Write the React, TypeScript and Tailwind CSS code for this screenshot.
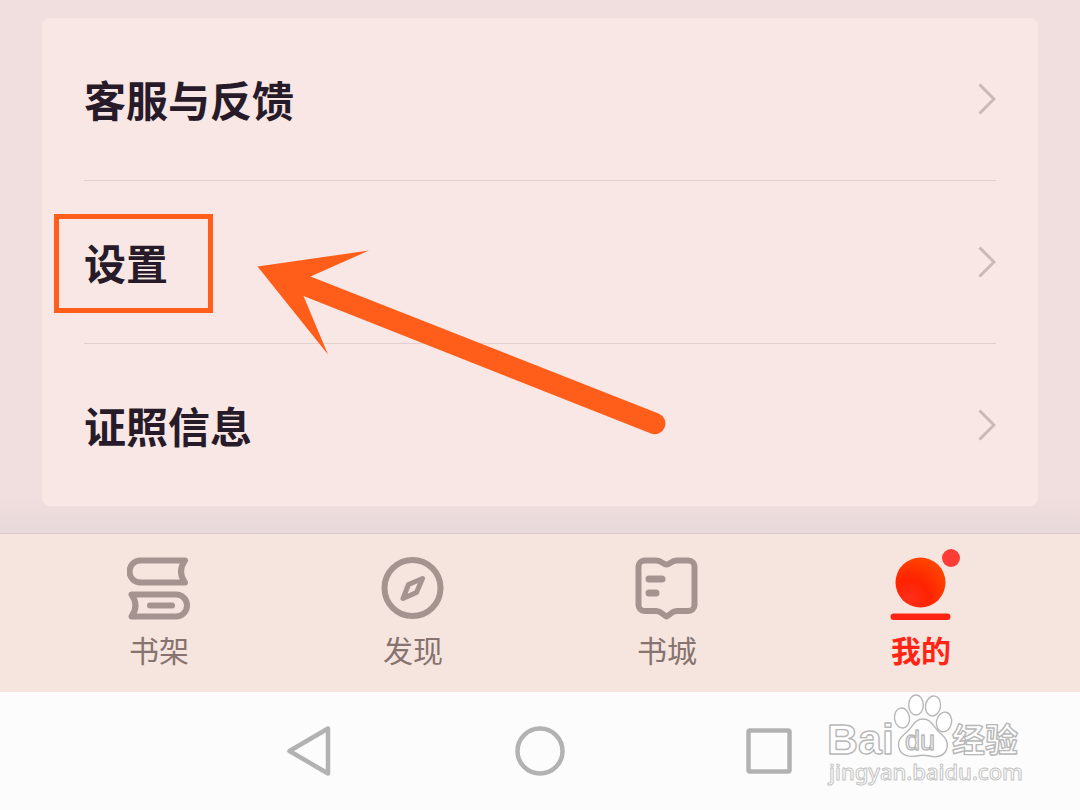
import type { ReactNode } from "react";

const menuItems = [
  { id: "feedback", label: "客服与反馈" },
  { id: "settings", label: "设置", highlighted: true },
  { id: "license", label: "证照信息" },
];

/* Icons */
function ShelfIcon() {
  return (
    <svg className="size-16" viewBox="0 0 64 64" fill="none" stroke="#a59390" strokeWidth="6" strokeLinejoin="round" strokeLinecap="round">
      <path d="M58 4.500H13.500a11 11 0 0 0 0 22H58q-8-11 0-22Z" />
      <path d="M4.500 38.500H49a11 11 0 0 1 0 22H4.500q8-11 0-22Z" />
      <path d="M23 49.500H45" />
    </svg>
  );
}

function CompassIcon() {
  return (
    <svg className="size-16" viewBox="0 0 64 64" fill="none" stroke="#a59390">
      <circle cx="31.500" cy="32" r="28" strokeWidth="6" />
      <path d="M41.500 22.500 27.500 28.500 22 42.500 35.500 36.500Z" strokeWidth="5" strokeLinejoin="round" />
    </svg>
  );
}

function StoreIcon() {
  return (
    <svg className="size-16" viewBox="0 0 64 64" fill="none" stroke="#a59390" strokeWidth="6" strokeLinejoin="round" strokeLinecap="round">
      <path d="M9.500 4.500H21.500c5 0 6 3.500 10 4c4-.5 5-4 10-4H53.500a6 6 0 0 1 6 6V49a6 6 0 0 1-6 6H41.500c-5 0-6 4-10 5.500c-4-1.500-5-5.500-10-5.500H9.500a6 6 0 0 1-6-6V10.500a6 6 0 0 1 6-6Z" />
      <path d="M14 23H27M14 37H21" strokeWidth="7" />
    </svg>
  );
}

function MineIcon() {
  return (
    <svg className="size-16 overflow-visible" viewBox="0 0 64 64">
      <defs>
        <radialGradient id="ball" cx="0.3" cy="0.8" r="0.9">
          <stop offset="0" stopColor="#ff2e1c" />
          <stop offset="0.4" stopColor="#ff2200" />
          <stop offset="1" stopColor="#ff4a00" />
        </radialGradient>
      </defs>
      <circle cx="31.500" cy="26.500" r="25" fill="url(#ball)" />
      <rect x="1.500" y="57.500" width="60" height="6.500" rx="3.250" fill="#ff2413" />
    </svg>
  );
}

function Chevron() {
  return (
    <svg className="h-8 w-[18px] shrink-0" viewBox="0 0 18 32" fill="none" stroke="#cbb9b8" strokeWidth="3">
      <path d="M1.500 1.500 16 16 1.500 30.500" />
    </svg>
  );
}

function Pointer() {
  return (
    <svg className="pointer-events-none absolute left-[172px] top-[68px] z-10 h-[188px] w-[412px]" viewBox="256 249 412 188">
      <path
        d="M257.500 266.500 369 250.500 310.500 276.500 658.500 413.500A10.500 10.500 0 0 1 651 433.500L303.500 296 328 354.500Z"
        fill="#ff5e1a"
      />
    </svg>
  );
}

function Watermark() {
  return (
    <svg
      className="pointer-events-none absolute right-14 top-0 h-24 w-[200px] overflow-visible"
      viewBox="0 0 200 96"
      fill="#fff"
      stroke="#b8b8b8"
      strokeWidth="1.400"
      strokeLinejoin="round"
    >
      <text x="3" y="62" fontSize="43" fontWeight="700" fontFamily="'Liberation Sans', Arial, sans-serif">Bai</text>
      <ellipse cx="78" cy="26" rx="7.500" ry="10" transform="rotate(-8 78 26)" />
      <ellipse cx="92" cy="13" rx="7.300" ry="10" />
      <ellipse cx="109" cy="14" rx="7.500" ry="10" transform="rotate(10 109 14)" />
      <ellipse cx="120" cy="30" rx="7.500" ry="10" transform="rotate(12 120 30)" />
      <path d="M99 27C91 27 89 34 84 39C77 45 73 48 75 56C77 64 86 65 92 64C97 63 101 63 106 64C113 66 121 64 123 56C125 48 119 44 114 39C109 34 107 27 99 27Z" />
      <text x="81" y="58" fontSize="27" fontFamily="'Liberation Sans', Arial, sans-serif">du</text>
      <text x="128" y="60" fontSize="33" fontWeight="700" fontFamily="'Noto Sans CJK SC', sans-serif">经验</text>
      <text x="5" y="88" fontSize="22" fontWeight="500" strokeWidth="1" stroke="#c4c4c4" fontFamily="'Noto Sans', sans-serif">
        jingyan.baidu.com
      </text>
    </svg>
  );
}

/* Bottom tab */
function Tab({ label, icon, active, badge }: { label: string; icon: ReactNode; active?: boolean; badge?: boolean }) {
  return (
    <button type="button" className="flex flex-1 flex-col items-center gap-[9px]">
      <span className="relative">
        {icon}
        {badge && <span className="absolute -right-[7px] -top-[7px] size-[18px] rounded-full bg-[#fb3d36]" />}
      </span>
      <span className={active ? "text-[30px] leading-10 font-bold text-[#ff2413]" : "text-[30px] leading-10 font-normal text-[#87736f]"}>
        {label}
      </span>
    </button>
  );
}

export default function App() {
  return (
    <div className="flex min-h-screen flex-col bg-[#fcfcfc] font-['Noto_Sans_CJK_SC',sans-serif]">
      {/* Menu card */}
      <main className="bg-[linear-gradient(to_bottom,#f1dfdf_0%,#f1dfdf_93%,#e9d8d9_100%)] px-[42px] pt-[18px] pb-[27px]">
        <ul className="rounded-lg bg-[#f8e7e4] px-[42px]">
          {menuItems.map((item) => (
            <li key={item.id} className="relative border-b border-[#e2d0cf] last:border-b-0">
              <button type="button" className="flex h-[162px] w-full items-center justify-between text-left">
                <span className="text-[42px] leading-[60px] font-bold text-[#281b29]">{item.label}</span>
                <Chevron />
              </button>
              {item.highlighted && (
                <>
                  <span className="pointer-events-none absolute -left-[30px] top-[33px] h-[99px] w-[159px] border-5 border-[#ff5e1a]" />
                  <Pointer />
                </>
              )}
            </li>
          ))}
        </ul>
      </main>

      {/* Tab bar */}
      <nav className="flex border-t border-[#d8c7c6] bg-[#f5e5de] px-8 pt-[22px] pb-[23px]">
        <Tab label="书架" icon={<ShelfIcon />} />
        <Tab label="发现" icon={<CompassIcon />} />
        <Tab label="书城" icon={<StoreIcon />} />
        <Tab label="我的" icon={<MineIcon />} active badge />
      </nav>

      {/* System navigation */}
      <footer className="relative flex-1 py-[31px]">
        <div className="mx-auto grid max-w-[690px] grid-cols-3 justify-items-center">
          <button type="button" aria-label="返回">
            <svg className="size-14" viewBox="0 0 56 56" fill="none" stroke="#b2b2b2" strokeWidth="4.500" strokeLinejoin="round">
              <path d="M7.500 28 46 5.500V50.500Z" />
            </svg>
          </button>
          <button type="button" aria-label="主页">
            <svg className="size-14" viewBox="0 0 56 56" fill="none" stroke="#b2b2b2" strokeWidth="4.500">
              <circle cx="28" cy="28" r="22.500" />
            </svg>
          </button>
          <button type="button" aria-label="最近任务">
            <svg className="size-14" viewBox="0 0 56 56" fill="none" stroke="#b2b2b2" strokeWidth="4.500">
              <rect x="6.500" y="7.500" width="41" height="41" rx="1.500" />
            </svg>
          </button>
        </div>
        <Watermark />
      </footer>
    </div>
  );
}
